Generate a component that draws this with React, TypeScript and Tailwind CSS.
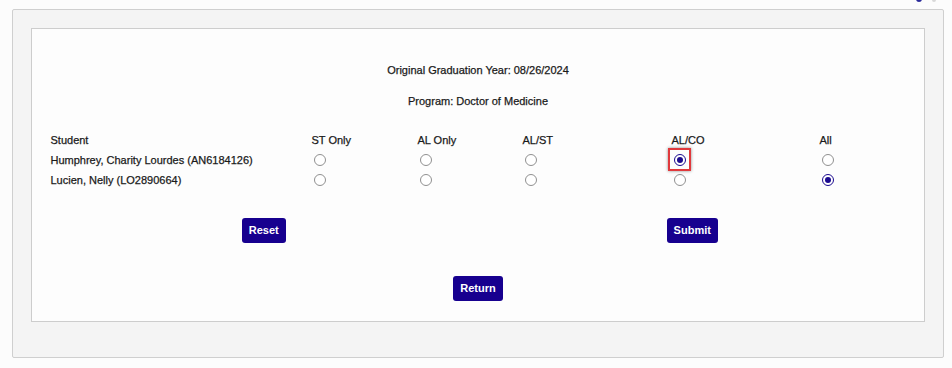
import { useState } from 'react'

const columns = ['ST Only', 'AL Only', 'AL/ST', 'AL/CO', 'All']

const students = [
  { name: 'Humphrey, Charity Lourdes (AN6184126)', choice: 'AL/CO' },
  { name: 'Lucien, Nelly (LO2890664)', choice: 'All' },
]

function Radio({ checked, onClick }: { checked: boolean; onClick: () => void }) {
  return (
    <span
      onClick={onClick}
      className={`ml-[2px] flex h-[12px] w-[12px] cursor-pointer items-center justify-center rounded-full border bg-white ${
        checked ? 'border-[#1b0a8f]' : 'border-[#909090]'
      }`}
    >
      {checked && <span className="h-[6px] w-[6px] rounded-full bg-[#1b0a8f]" />}
    </span>
  )
}

function Button({ label }: { label: string }) {
  return (
    <button className="h-[25px] rounded-[3px] bg-[#17008f] px-[7px] text-[11px] font-bold text-white">
      {label}
    </button>
  )
}

export default function App() {
  const [choices, setChoices] = useState(students.map((s) => s.choice))

  return (
    <div className="relative min-h-[368px] bg-[#fcfcfc] pl-[12px] pt-[9px] font-['Liberation_Sans',Arial,sans-serif] text-[#1a1a1a] [-webkit-text-stroke:0.25px_#1a1a1a]">
      {/* cut-off icons at the very top */}
      <span className="absolute left-[916px] top-[-4px] h-[6px] w-[6px] rounded-full bg-[#2a2a9a]" />
      <span className="absolute left-[932px] top-[-4px] h-[6px] w-[4px] rounded-sm bg-[#d8d8d8]" />

      <div className="h-[349px] w-[932px] rounded-[2px] border border-[#cfcfcf] bg-[#f4f4f4] pb-[35px] pl-[18px] pr-[18px] pt-[18px]">
        <div className="h-[294px] w-[894px] border border-[#cdcdcd] bg-[#fdfdfd] pt-[35px]">
          <div className="text-center text-[11px] leading-[13px]">Original Graduation Year: 08/26/2024</div>
          <div className="mt-[18px] text-center text-[11px] leading-[13px]">Program: Doctor of Medicine</div>

          <div className="mx-auto mt-[22px] grid w-[857px] grid-cols-[262px_106px_105px_149px_148px_87px] text-[11px]">
            <div className="flex h-[20px] items-center pl-[1px]">Student</div>
            {columns.map((c) => (
              <div key={c} className="flex h-[20px] items-center">
                {c}
              </div>
            ))}
            {students.map((s, i) => (
              <div key={s.name} className="contents">
                <div className="flex h-[20px] items-center pl-[1px]">{s.name}</div>
                {columns.map((c) => (
                  <div key={c} className="relative flex h-[20px] items-center">
                    <Radio
                      checked={choices[i] === c}
                      onClick={() => setChoices(choices.map((v, j) => (j === i ? c : v)))}
                    />
                    {i === 0 && c === 'AL/CO' && (
                      <span className="pointer-events-none absolute left-[-4px] top-[-2px] h-[23px] w-[23px] border-2 border-[#e0393c] shadow-[0_0_3px_rgba(0,0,0,0.45)]" />
                    )}
                  </div>
                ))}
              </div>
            ))}
          </div>

          <div className="mx-auto mt-[28px] grid w-[857px] grid-cols-2 [-webkit-text-stroke:0]">
            <div className="flex justify-center">
              <Button label="Reset" />
            </div>
            <div className="flex justify-center">
              <Button label="Submit" />
            </div>
          </div>

          <div className="mt-[33px] flex justify-center [-webkit-text-stroke:0]">
            <Button label="Return" />
          </div>
        </div>
      </div>
    </div>
  )
}
